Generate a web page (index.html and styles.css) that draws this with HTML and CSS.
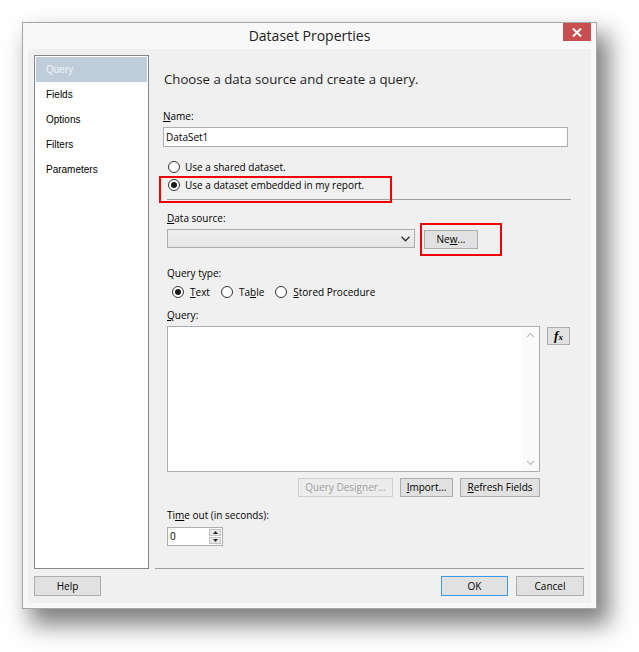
FILE: index.html
```html
<!DOCTYPE html>
<html>
<head>
<meta charset="utf-8">
<link rel="stylesheet" href="styles.css">
</head>
<body>
<div class="dialog">
  <div class="titlebar">
    <span></span>
    <span class="title">Dataset Properties</span>
    <span class="close"><svg width="10" height="9" viewBox="0 0 10 9"><path d="M1 0.5 L9 8.5 M9 0.5 L1 8.5" stroke="#fff" stroke-width="2"/></svg></span>
  </div>
  <div class="client">
    <ul class="nav">
      <li class="sel">Query</li>
      <li>Fields</li>
      <li>Options</li>
      <li>Filters</li>
      <li>Parameters</li>
    </ul>
    <div class="main">
      <div class="heading">Choose a data source and create a query.</div>
      <div class="label name-label"><u>N</u>ame:</div>
      <div class="textbox name-box">DataSet1</div>
      <div class="radio-group">
        <div class="radio-row"><span class="radio"></span>Use a shared dataset.</div>
        <div class="radio-row annotated"><span class="radio on"></span>Use a dataset embedded in my report.<span class="redbox rb1"></span></div>
      </div>
      <div class="sep"></div>
      <div class="label"><u>D</u>ata source:</div>
      <div class="ds-row">
        <div class="combo"><svg width="9" height="6" viewBox="0 0 9 6"><path d="M0.5 0.8 L4.5 4.8 L8.5 0.8" fill="none" stroke="#333" stroke-width="1.4"/></svg></div>
        <div class="annotated">
          <div class="btn new">Ne<u>w</u>...</div>
          <span class="redbox rb2"></span>
        </div>
      </div>
      <div class="label qt-label">Query type:</div>
      <div class="qt-row">
        <span class="opt"><span class="radio on"></span><u>T</u>ext</span>
        <span class="opt"><span class="radio"></span>Ta<u>b</u>le</span>
        <span class="opt"><span class="radio"></span><u>S</u>tored Procedure</span>
      </div>
      <div class="label q-label"><u>Q</u>uery:</div>
      <div class="q-row">
        <div class="qarea">
          <div class="qtext"></div>
          <div class="vscroll">
            <svg width="9" height="6" viewBox="0 0 9 6"><path d="M1 5 L4.5 1.5 L8 5" fill="none" stroke="#c2c2c2" stroke-width="1.2"/></svg>
            <svg width="9" height="6" viewBox="0 0 9 6"><path d="M1 1 L4.5 4.5 L8 1" fill="none" stroke="#c2c2c2" stroke-width="1.2"/></svg>
          </div>
        </div>
        <div class="btn fx"><i>f</i><i class="x">x</i></div>
      </div>
      <div class="q-buttons">
        <div class="btn disabled qd">Query Designer...</div>
        <div class="btn imp"><u>I</u>mport...</div>
        <div class="btn ref"><u>R</u>efresh Fields</div>
      </div>
      <div class="label to-label">Ti<u>m</u>e out (in seconds):</div>
      <div class="spinner">
        <div class="spin-val">0</div>
        <div class="spin-btns">
          <div class="spin-b"><svg width="5" height="3" viewBox="0 0 5 3"><path d="M0 3 L2.5 0 L5 3Z" fill="#222"/></svg></div>
          <div class="spin-b"><svg width="5" height="3" viewBox="0 0 5 3"><path d="M0 0 L2.5 3 L5 0Z" fill="#222"/></svg></div>
        </div>
      </div>
    </div>
    <div class="footer-left">
      <div class="btn help">Help</div>
    </div>
    <div class="footer-right">
      <div class="btn ok">OK</div>
      <div class="btn cancel">Cancel</div>
    </div>
  </div>
</div>
</body>
</html>
```
FILE: styles.css
```css
html, body {
  margin: 0;
  padding: 0;
  background: #ffffff;
}
body {
  font-family: "Open Sans", "Noto Sans", sans-serif;
  font-size: 10px;
  color: #000;
  padding: 22px 0 43px 22px;
  min-height: 652px;
  box-sizing: border-box;
}
u { text-decoration: underline; text-underline-offset: 1px; }

.dialog {
  width: 573px;
  height: 585px;
  border: 1px solid #a6a6a6;
  background: #f8f8f8;
  box-shadow: 10px 14px 22px 2px rgba(0, 0, 0, 0.5);
}

.titlebar {
  display: grid;
  grid-template-columns: 1fr auto 1fr;
  align-items: start;
  height: 26px;
}
.title {
  font-size: 14px;
  color: #222;
  line-height: 26px;
}
.close {
  justify-self: end;
  width: 28px;
  height: 18px;
  margin-right: 5px;
  background: #c74f4f;
  display: flex;
  align-items: center;
  justify-content: center;
}

.client {
  margin: 0 5px;
  height: 554px;
  background: #f0f0f0;
  box-sizing: border-box;
  padding: 6px 7px 0 6px;
  display: grid;
  grid-template-columns: 115px minmax(0, 1fr);
  grid-template-rows: 514px auto;
  column-gap: 6px;
}

.nav {
  margin: 0;
  padding: 1px;
  list-style: none;
  background: #fff;
  border: 1px solid #828790;
  box-sizing: border-box;
  font-family: "Liberation Sans", Arial, sans-serif;
  font-size: 10px;
}
.nav li {
  height: 25px;
  line-height: 25px;
  padding-left: 10px;
  color: #000;
}
.nav li.sel {
  background: #bfcddb;
  color: #eef1f5;
}

.main {
  border-bottom: 1px solid #a0a0a0;
  box-sizing: border-box;
  padding-left: 12px;
  padding-right: 16px;
  display: flex;
  flex-direction: column;
  align-items: flex-start;
}
.heading {
  margin-top: 14px;
  margin-left: -3px;
  font-size: 13.2px;
  line-height: 20px;
  color: #1e1e1e;
}
.label {
  line-height: 16px;
  height: 16px;
}
.name-label { margin-top: 19px; margin-left: -4px; }
.textbox {
  box-sizing: border-box;
  background: #fff;
  border: 1px solid #abadb3;
}
.name-box {
  margin-top: 3px;
  margin-left: -4px;
  width: 405px;
  height: 20px;
  line-height: 18px;
  padding-left: 2px;
}
.radio-group { margin-top: 11px; }
.radio-row {
  height: 18px;
  line-height: 18px;
  display: flex;
  align-items: center;
  padding-left: 1px;
}
.radio {
  display: inline-block;
  box-sizing: border-box;
  width: 12px;
  height: 12px;
  border: 1px solid #333;
  border-radius: 50%;
  background: #fff;
  margin-right: 5px;
  position: relative;
  flex: none;
}
.radio.on::after {
  content: "";
  position: absolute;
  left: 2px;
  top: 2px;
  width: 6px;
  height: 6px;
  border-radius: 50%;
  background: #1a1a1a;
}
.annotated { position: relative; }
.redbox {
  position: absolute;
  border: 2px solid #f00000;
  box-sizing: border-box;
}
.rb1 { left: -8px; top: 0; width: 233px; height: 27px; }
.rb2 { left: -4px; top: -6px; width: 82px; height: 33px; }

.sep {
  margin-top: 5px;
  align-self: stretch;
  margin-right: -3px;
  height: 1px;
  background: #a0a0a0;
}
.sep + .label { margin-top: 10px; }

.ds-row {
  margin-top: 3px;
  display: flex;
  align-items: flex-start;
  gap: 9px;
}
.combo {
  box-sizing: border-box;
  width: 248px;
  height: 19px;
  border: 1px solid #acacac;
  background: linear-gradient(#efefef, #e5e5e5);
  display: flex;
  align-items: center;
  justify-content: flex-end;
  padding-right: 4px;
}
.btn {
  box-sizing: border-box;
  height: 19px;
  line-height: 17px;
  text-align: center;
  border: 1px solid #adadad;
  background: #e1e1e1;
  color: #000;
  white-space: nowrap;
}
.new { width: 54px; margin-top: 1px; }
.qt-label { margin-top: 16px; }
.qt-row {
  margin-top: 2px;
  height: 18px;
  display: flex;
  align-items: center;
  padding-left: 5px;
}
.opt {
  display: inline-flex;
  align-items: center;
  margin-right: 11px;
}
.opt .radio { margin-right: 6px; }
.q-label { margin-top: 6px; }
.q-row {
  margin-top: 3px;
  display: flex;
  align-items: flex-start;
  gap: 7px;
}
.qarea {
  box-sizing: border-box;
  width: 373px;
  height: 146px;
  border: 1px solid #abadb3;
  background: #fff;
  display: flex;
}
.qtext { flex: 1; }
.vscroll {
  width: 17px;
  background: #fafafa;
  display: flex;
  flex-direction: column;
  justify-content: space-between;
  align-items: center;
  padding: 5px 0 5px;
}
.fx {
  width: 23px;
  height: 18px;
  margin-top: 1px;
  font-family: "Liberation Serif", serif;
  font-weight: bold;
  font-size: 13px;
  line-height: 15px;
}
.fx .x { font-size: 9px; }
.q-buttons {
  margin-top: 6px;
  width: 373px;
  display: flex;
  justify-content: flex-end;
  gap: 7px;
}
.qd { width: 95px; }
.imp { width: 53px; }
.ref { width: 80px; }
.btn.disabled {
  color: #a0a0a0;
  border-color: #cfcfcf;
  background: #ececec;
}
.to-label { margin-top: 10px; }
.spinner {
  margin-top: 4px;
  box-sizing: border-box;
  width: 56px;
  height: 19px;
  border: 1px solid #abadb3;
  background: #fff;
  display: flex;
}
.spin-val {
  flex: 1;
  padding-left: 2px;
  line-height: 16px;
}
.spin-btns {
  width: 14px;
  display: flex;
  flex-direction: column;
  gap: 1px;
  padding: 1px;
  box-sizing: border-box;
}
.spin-b {
  flex: 1;
  background: #e6e6e6;
  border: 1px solid #c4c4c4;
  display: flex;
  align-items: center;
  justify-content: center;
}

.footer-left, .footer-right {
  margin-top: 7px;
  display: flex;
}
.footer-right {
  justify-content: flex-end;
  gap: 8px;
}
.help, .ok, .cancel {
  width: 67px;
  height: 20px;
  line-height: 18px;
}
.cancel { width: 68px; }
.ok { border-color: #3c9be6; }
```
